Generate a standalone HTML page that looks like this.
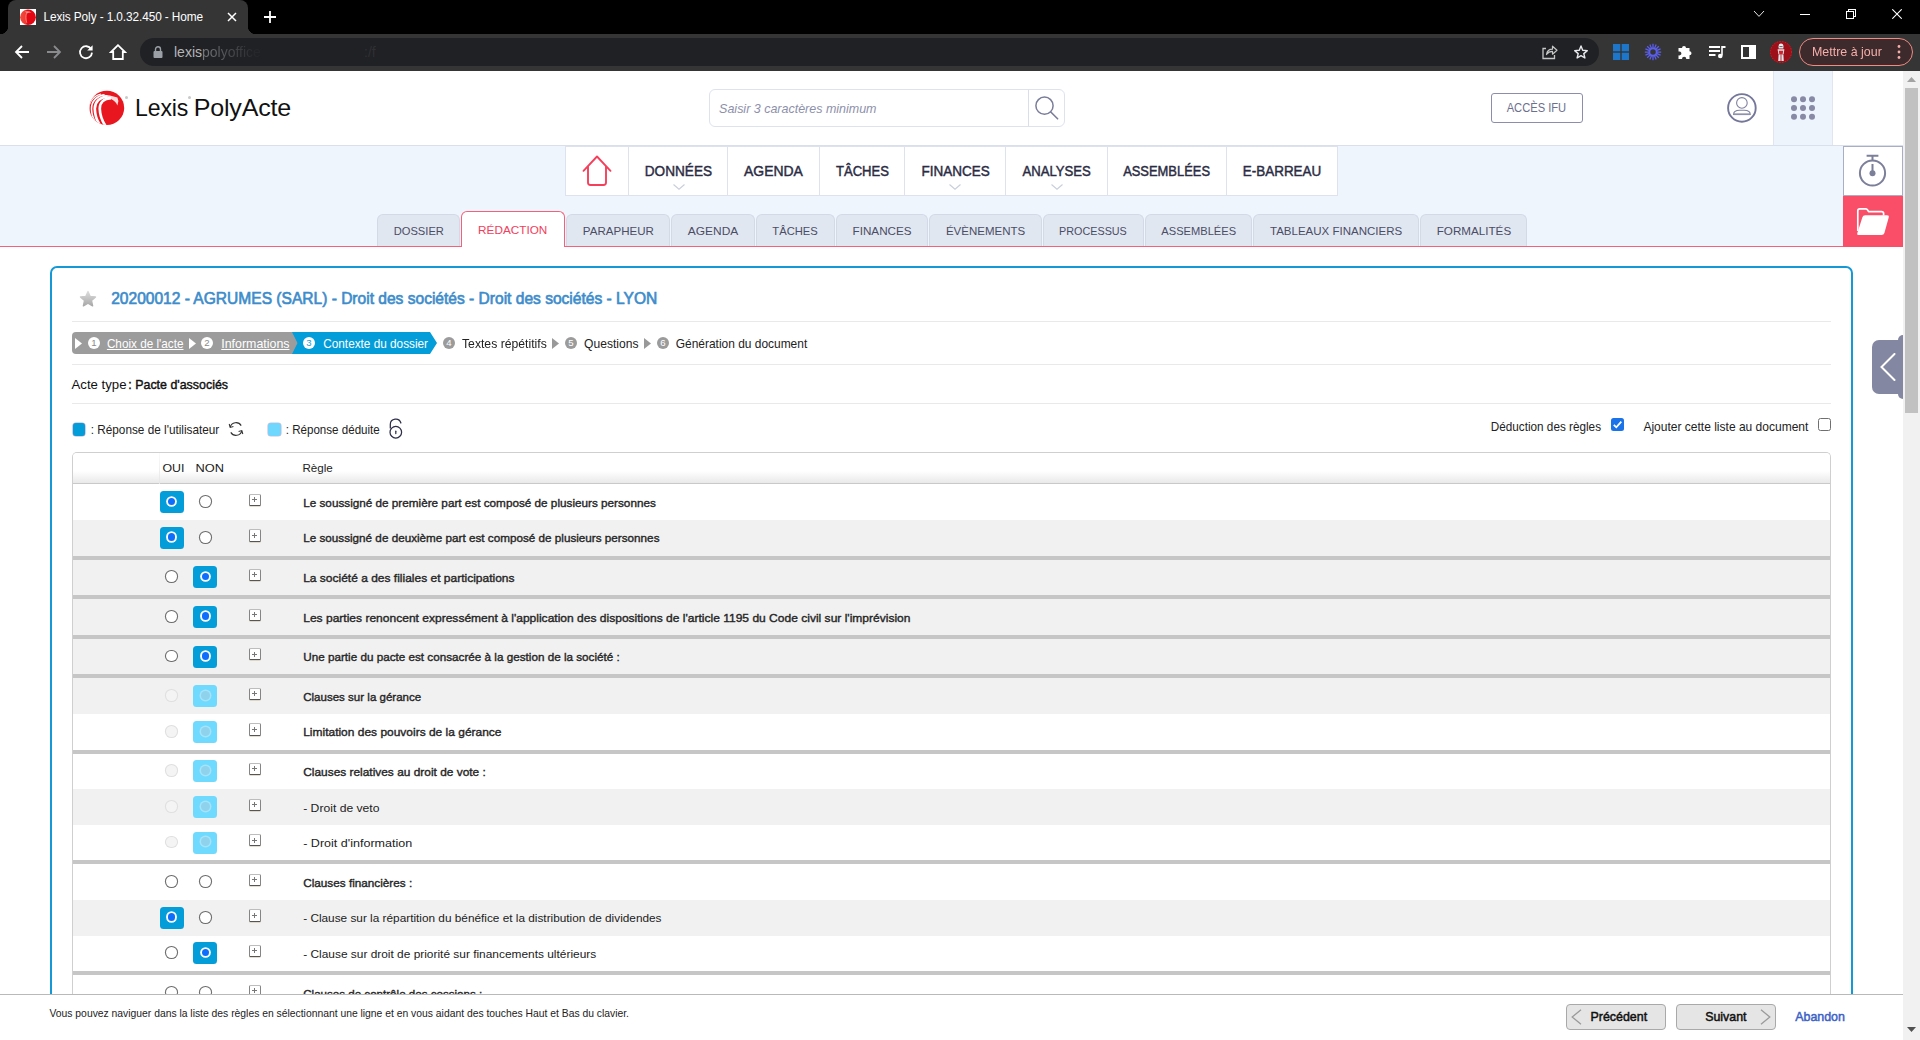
<!DOCTYPE html>
<html lang="fr">
<head>
<meta charset="utf-8">
<title>Lexis Poly - 1.0.32.450 - Home</title>
<style>
*{box-sizing:border-box;margin:0;padding:0}
html,body{width:1920px;height:1040px;overflow:hidden;background:#fff;font-family:"Liberation Sans",sans-serif;color:#222}
.abs{position:absolute}
#root{position:relative;width:1920px;height:1040px;overflow:hidden}
/* ---------- browser chrome ---------- */
#tabstrip{left:0;top:0;width:1920px;height:34px;background:#000}
#tab{left:8px;top:0;width:240px;height:34px;background:#353535;border-radius:8px 8px 0 0}
#tab:before,#tab:after{content:"";position:absolute;bottom:0;width:8px;height:8px;background:radial-gradient(circle at 0 0,transparent 8px,#353535 8.5px)}
#tab:before{left:-8px}
#tab:after{right:-8px;background:radial-gradient(circle at 100% 0,transparent 8px,#353535 8.5px)}
#tabtitle{left:44px;top:10px;font-size:12px;color:#fff;white-space:nowrap;letter-spacing:-.1px}
#toolbar{left:0;top:34px;width:1920px;height:37px;background:#353535}
#omni{left:140px;top:38px;width:1459px;height:28px;border-radius:14px;background:#202124}
#url{left:174px;top:44px;font-size:14px;color:#e8eaed;white-space:nowrap}
#url2{left:364px;top:44px;font-size:14px;color:#2f3034;white-space:nowrap}#url{color:#b4b6b9}#url span{background:linear-gradient(90deg,#787a7e 0,#4c4e52 45%,#26272b 90%);-webkit-background-clip:text;background-clip:text;color:transparent}
#upd{left:1799px;top:38px;width:114px;height:28px;border-radius:14px;border:1px solid #f28b82;background:#3c2a2c;color:#f6aea9;font-size:13px;line-height:26px;padding-left:12px;white-space:nowrap}
/* ---------- page ---------- */
#page{left:0;top:71px;width:1903px;height:969px;background:#fff;overflow:hidden}
#pg{position:absolute;left:0;top:-71px;width:1903px;height:1040px}
#vscroll{left:1903px;top:71px;width:17px;height:969px;background:#f1f1f1}
#vthumb{left:1905px;top:88px;width:13px;height:325px;background:#c1c1c1}

/* header */
#hdr{left:0;top:71px;width:1903px;height:74px;background:#fff}
#logotxt{left:135px;top:94px;font-size:24px;color:#111;white-space:nowrap;letter-spacing:-.2px;line-height:28px}
#search{left:709px;top:89px;width:356px;height:38px;border:1px solid #dde2ee;border-radius:6px;background:#fff}
#search i{position:absolute;left:10px;top:11px;font-size:13.5px;color:#8d90aa;white-space:nowrap;font-style:italic;line-height:16px}
#search b{position:absolute;left:318px;top:0;width:1px;height:36px;background:#d9deec}
#ifu{left:1491px;top:93px;width:92px;height:30px;border:1px solid #8a8dab;border-radius:3px;color:#6c6f8e;font-size:13px;line-height:27px;text-align:center;white-space:nowrap}
#gridbg{left:1773px;top:71px;width:60px;height:75px;background:#eef4fb;border-left:1px solid #dfe6f1;border-right:1px solid #dfe6f1}
/* nav */
#nav{left:0;top:145px;width:1903px;height:102px;background:#eff5fc;border-top:1px solid #d9e0ec}
#redline{left:0;top:246px;width:1903px;height:1px;background:#f4617a}
#menu{left:565px;top:146px;width:773px;height:50px;background:#fff;border:1px solid #dde2ee}
.mi{position:absolute;top:0;height:48px;border-left:1px solid #dde2ee;font-size:14.4px;-webkit-text-stroke:.45px #2b2c44;color:#2b2c44;line-height:48px;white-space:nowrap;text-align:center}
.mi svg{position:absolute;left:50%;margin-left:-6px;top:37px}
.tab{position:absolute;top:214px;height:33px;background:#e1e7f0;border:1px solid #d3dae6;border-bottom:none;border-radius:6px 6px 0 0;font-size:11.5px;color:#4b4d66;line-height:33.6px;text-align:center;white-space:nowrap}
.tab.on{top:211px;height:36px;background:#fff;border-color:#f6607a;color:#f2405c;line-height:37.8px;z-index:2}
#timer{left:1843px;top:146px;width:60px;height:50px;background:#fff;border:1px solid #a9aec4}
#folder{left:1843px;top:196px;width:60px;height:51px;background:#fa4e68}

/* panel */
#panel{left:50px;top:266px;width:1803px;height:800px;border:2px solid #1499d6;border-radius:7px;background:#fff}
.hr{position:absolute;left:72px;width:1759px;height:1px;background:#e9e9e9}
#title{left:111px;top:287.8px;font-size:15.8px;-webkit-text-stroke:.65px #3d8ccb;color:#3d8ccb;white-space:nowrap;line-height:22px}
/* breadcrumb */
#bcgray{left:72px;top:332px;width:226px;height:22px;background:#9c9c9c;border-radius:4px 0 0 4px}
.bc{position:absolute;top:333px;height:22px;line-height:22px;font-size:12.6px;white-space:nowrap}
.bc.w{color:#fff}
.bc.u span{text-decoration:underline}
.bc.k{color:#222}
.num{position:absolute;top:337px;width:12px;height:12px;border-radius:6px;font-size:9.6px;font-style:normal;line-height:12.4px;text-align:center;margin-left:-1px}
.num.a{background:#fff;color:#8a8a8a}
.num.b{background:#fff;color:#1499d6}
.num.c{background:#9b9b9b;color:#fff;margin-left:0}
#acte{left:72px;top:376.5px;font-size:13.6px;color:#111;white-space:nowrap;line-height:16px}
.lg{position:absolute;top:421.8px;font-size:12.2px;color:#222;white-space:nowrap;line-height:16px}
.sq{position:absolute;top:423.4px;width:13px;height:12.6px;border-radius:3px}
.rt{position:absolute;top:418.6px;font-size:12.2px;color:#222;white-space:nowrap;line-height:16px}
.cb{position:absolute;top:418px;width:13px;height:13px;border-radius:2.5px}
/* table */
#tbl{left:72px;top:452px;width:1759px;height:560px;border:1px solid #cfcfcf;border-bottom:none;border-radius:5px 5px 0 0;overflow:hidden;background:#fff}
#th{position:relative;height:31px;margin-bottom:.4px;background:linear-gradient(#fff 0,#fff 60%,#e9e9e9 100%);border-bottom:1px solid #c9c9c9}
#th span{position:absolute;top:6.6px;font-size:11.6px;color:#222;line-height:15px;white-space:nowrap}
.sep{height:4px;background:#c6c6c6}
.r{position:relative;height:35.6px;background:#fff}
.r.g{background:#f1f1f1}
.r p{position:absolute;left:231px;top:11.4px;font-size:11.8px;line-height:15px;color:#222;white-space:nowrap}
.r p.b{-webkit-text-stroke:.38px #262626;color:#262626}
.bx{position:absolute;top:6.8px;width:24px;height:22px;border-radius:3.5px;background:#039dda}
.bx.l{background:#6fd9fe}
.bx.y{left:87px}.bx.n{left:120px}
.rd{position:absolute;top:11.8px;width:10.8px;height:10.8px;border-radius:50%;background:#fff;box-shadow:0 0 0 1.1px #6e6e6e}
.rd.y{left:93.1px}.rd.n{left:127.05px}
.rd.on{width:7.6px;height:7.6px;top:13.3px;background:#0d6efd;box-shadow:0 0 0 1.85px #fff}
.rd.ld{width:9px;height:9px;top:12.6px;background:#8ed2ec;box-shadow:0 0 0 1.5px #a5e3fb}
.rd.on.y{left:94.6px}.rd.on.n{left:128.65px}
.rd.ld.y{left:93.9px}.rd.ld.n{left:127.95px}
.rd.d{background:#f4f4f4;box-shadow:0 0 0 1.1px #e0e0e0}
.pl{position:absolute;left:175.7px;top:9.4px;width:12.4px;height:12.2px;border:1px solid #858585;border-top-color:#bdbdbd;border-bottom-color:#555;border-radius:1.5px;background:#fff;box-shadow:0 .5px 0 #c9b9a0}
.pl:before{content:"";position:absolute;left:2.5px;top:4.5px;width:5px;height:1px;background:#777}
.pl:after{content:"";position:absolute;left:4.5px;top:2.5px;width:1px;height:5px;background:#777}
/* footer */
#foot{left:0;top:994px;width:1903px;height:46px;background:#fff;border-top:1px solid #b9b9b9}
#foottxt{left:50px;top:1006.4px;font-size:11px;color:#222;white-space:nowrap;line-height:15px}
.btn{position:absolute;top:1004px;width:100px;height:26px;border:1px solid #a9a9a9;border-radius:4px;background:#e5e5e5;font-size:13px;-webkit-text-stroke:.5px #111;color:#111;line-height:24.8px;white-space:nowrap}
#aband{left:1795px;top:1009.4px;font-size:13px;-webkit-text-stroke:.5px #3b62c6;color:#3b62c6;white-space:nowrap;line-height:16px}
#handle{left:1872px;top:340px;width:31px;height:54px;background:#8387a2;border-radius:7px 0 0 7px}
#handle2{left:1898px;top:335px;width:5px;height:64px;background:#8387a2;border-radius:5px 0 0 5px}
#th em{font-style:normal}
/*FIT*/
#ttab{display:inline-block;transform-origin:0 50%;transform:translateX(-0.50px) scaleX(0.9861)}
#tupd{display:inline-block;transform-origin:0 50%;transform:translateX(0.00px) scaleX(0.9564)}
#tlogo1{display:inline-block;transform-origin:0 50%;transform:translateX(0.10px) scaleX(0.9613)}
#tlogo2{display:inline-block;transform-origin:0 50%;transform:translateX(-3.25px) scaleX(1.0443)}
#tsearch{display:inline-block;transform-origin:0 50%;transform:translateX(-0.90px) scaleX(0.9243)}
#tifu{display:inline-block;transform-origin:0 50%;transform:translateX(4.67px) scaleX(0.8580)}
#m0{display:inline-block;transform-origin:0 50%;transform:translateX(1.79px) scaleX(0.9456)}
#m1{display:inline-block;transform-origin:0 50%;transform:translateX(0.99px) scaleX(0.9690)}
#m2{display:inline-block;transform-origin:0 50%;transform:translateX(2.94px) scaleX(0.9088)}
#m3{display:inline-block;transform-origin:0 50%;transform:translateX(2.59px) scaleX(0.9386)}
#m4{display:inline-block;transform-origin:0 50%;transform:translateX(3.47px) scaleX(0.9130)}
#m5{display:inline-block;transform-origin:0 50%;transform:translateX(4.14px) scaleX(0.8974)}
#m6{display:inline-block;transform-origin:0 50%;transform:translateX(2.78px) scaleX(0.9349)}
#tb0{display:inline-block;transform-origin:0 50%;transform:translateX(0.64px) scaleX(0.9707)}
#tb1{display:inline-block;transform-origin:0 50%;transform:translateX(-0.88px) scaleX(1.0224)}
#tb2{display:inline-block;transform-origin:0 50%;transform:translateX(-0.14px) scaleX(1.0040)}
#tb3{display:inline-block;transform-origin:0 50%;transform:translateX(-1.20px) scaleX(1.0396)}
#tb4{display:inline-block;transform-origin:0 50%;transform:translateX(0.33px) scaleX(0.9752)}
#tb5{display:inline-block;transform-origin:0 50%;transform:translateX(-0.42px) scaleX(1.0145)}
#tb6{display:inline-block;transform-origin:0 50%;transform:translateX(-0.12px) scaleX(1.0013)}
#tb7{display:inline-block;transform-origin:0 50%;transform:translateX(2.11px) scaleX(0.9374)}
#tb8{display:inline-block;transform-origin:0 50%;transform:translateX(1.37px) scaleX(0.9658)}
#tb9{display:inline-block;transform-origin:0 50%;transform:translateX(-0.05px) scaleX(1.0017)}
#tb10{display:inline-block;transform-origin:0 50%;transform:translateX(-0.25px) scaleX(1.0125)}
#ttitle{display:inline-block;transform-origin:0 50%;transform:translateX(0.20px) scaleX(0.9846)}
#bc1{display:inline-block;transform-origin:0 50%;transform:translateX(-0.10px) scaleX(0.9317)}
#bc2{display:inline-block;transform-origin:0 50%;transform:translateX(-0.75px) scaleX(0.9849)}
#bc3{display:inline-block;transform-origin:0 50%;transform:translateX(-0.75px) scaleX(0.9351)}
#bc4{display:inline-block;transform-origin:0 50%;transform:translateX(0.00px) scaleX(0.9686)}
#bc5{display:inline-block;transform-origin:0 50%;transform:translateX(-0.90px) scaleX(0.9594)}
#bc6{display:inline-block;transform-origin:0 50%;transform:translateX(-0.25px) scaleX(0.9482)}
#tacte1{display:inline-block;transform-origin:0 50%;transform:translateX(-0.50px) scaleX(0.9705)}
#tacte2{display:inline-block;transform-origin:0 50%;transform:translateX(-3.70px) scaleX(0.9140)}
#lg1{display:inline-block;transform-origin:0 50%;transform:translateX(-0.25px) scaleX(0.9655)}
#lg2{display:inline-block;transform-origin:0 50%;transform:translateX(-0.25px) scaleX(0.9501)}
#rt1{display:inline-block;transform-origin:0 50%;transform:translateX(-0.20px) scaleX(0.9624)}
#rt2{display:inline-block;transform-origin:0 50%;transform:translateX(-0.60px) scaleX(0.9860)}
#th0{display:inline-block;transform-origin:0 50%;transform:translateX(-0.50px) scaleX(1.0667)}
#th1{display:inline-block;transform-origin:0 50%;transform:translateX(-0.50px) scaleX(1.1061)}
#th2{display:inline-block;transform-origin:0 50%;transform:translateX(-0.50px) scaleX(1.0001)}
#r1{display:inline-block;transform-origin:0 50%;transform:translateX(-0.80px) scaleX(0.9939)}
#r2{display:inline-block;transform-origin:0 50%;transform:translateX(-0.80px) scaleX(0.9914)}
#r3{display:inline-block;transform-origin:0 50%;transform:translateX(-0.80px) scaleX(1.0165)}
#r4{display:inline-block;transform-origin:0 50%;transform:translateX(-0.80px) scaleX(1.0200)}
#r5{display:inline-block;transform-origin:0 50%;transform:translateX(-0.80px) scaleX(0.9913)}
#r6{display:inline-block;transform-origin:0 50%;transform:translateX(-0.80px) scaleX(0.9780)}
#r7{display:inline-block;transform-origin:0 50%;transform:translateX(-0.80px) scaleX(1.0147)}
#r8{display:inline-block;transform-origin:0 50%;transform:translateX(-0.80px) scaleX(1.0089)}
#r9{display:inline-block;transform-origin:0 50%;transform:translateX(-0.80px) scaleX(1.0298)}
#r10{display:inline-block;transform-origin:0 50%;transform:translateX(-0.80px) scaleX(1.0628)}
#r11{display:inline-block;transform-origin:0 50%;transform:translateX(-0.80px) scaleX(0.9953)}
#r12{display:inline-block;transform-origin:0 50%;transform:translateX(-0.80px) scaleX(1.0007)}
#r13{display:inline-block;transform-origin:0 50%;transform:translateX(-0.80px) scaleX(1.0087)}
#r14{display:inline-block;transform-origin:0 50%;transform:translateX(-0.80px) scaleX(0.9819)}
#tfoot{display:inline-block;transform-origin:0 50%;transform:translateX(-0.50px) scaleX(0.9401)}
#tprev{display:inline-block;transform-origin:0 50%;transform:translateX(-1.50px) scaleX(0.9550)}
#tnext{display:inline-block;transform-origin:0 50%;transform:translateX(-0.80px) scaleX(0.9522)}
#taband{display:inline-block;transform-origin:0 50%;transform:translateX(0.20px) scaleX(0.9546)}
/*ENDFIT*/
#acte b{font-weight:normal;-webkit-text-stroke:.45px #111}
</style>
</head>
<body>
<div id="root">
<!-- BROWSER CHROME -->
<div id="tabstrip" class="abs"></div>
<div id="tab" class="abs"></div>
<svg class="abs" style="left:20px;top:9px" width="16" height="16" viewBox="0 0 16 16"><defs><linearGradient id="fg" x1="0" y1="0" x2="1" y2="0"><stop offset="0" stop-color="#f24a3e"/><stop offset=".38" stop-color="#ee3a32"/><stop offset=".42" stop-color="#e30613"/><stop offset="1" stop-color="#e30613"/></linearGradient></defs><rect width="16" height="16" fill="#fff"/><ellipse cx="8" cy="8.2" rx="7.9" ry="7.7" fill="url(#fg)"/><path d="M6.6 4.2 C5.6 6.5 5.6 10 6.8 13.8" stroke="#f58f7f" stroke-width=".8" fill="none"/><path d="M5 2.6 Q8.5 1.6 11.5 3.6 Q9 3 7 4.6 Z" fill="#f9b9ab" opacity=".8"/></svg>
<div id="tabtitle" class="abs"><span id="ttab">Lexis Poly - 1.0.32.450 - Home</span></div>
<svg class="abs" style="left:227px;top:12px" width="10" height="10" viewBox="0 0 10 10"><path d="M1 1 L9 9 M9 1 L1 9" stroke="#fff" stroke-width="1.5"/></svg>
<svg class="abs" style="left:264px;top:11px" width="12" height="12" viewBox="0 0 12 12"><path d="M6 0 V12 M0 6 H12" stroke="#fff" stroke-width="1.8"/></svg>
<!-- window controls -->
<svg class="abs" style="left:1753px;top:10px" width="12" height="8" viewBox="0 0 12 8"><path d="M1 1 L6 6.4 L11 1" stroke="#e6e6e6" stroke-width="1" fill="none"/></svg>
<div class="abs" style="left:1800px;top:14px;width:10px;height:1px;background:#fff"></div>
<svg class="abs" style="left:1846px;top:9px" width="10" height="10" viewBox="0 0 10 10" shape-rendering="crispEdges"><path d="M.5 2.5 H7.5 V9.5 H.5 Z M2.5 2.5 V.5 H9.5 V7.5 H7.5" stroke="#fff" stroke-width="1" fill="none"/></svg>
<svg class="abs" style="left:1892px;top:9px" width="10" height="10" viewBox="0 0 10 10"><path d="M.3 .3 L9.7 9.7 M9.7 .3 L.3 9.7" stroke="#fff" stroke-width="1.1"/></svg>
<div id="toolbar" class="abs"></div>
<div id="omni" class="abs"></div>
<!-- nav icons -->
<svg class="abs" style="left:14px;top:44px" width="16" height="16" viewBox="0 0 16 16"><path d="M15 8 H2.5 M8 2 L2 8 L8 14" stroke="#fff" stroke-width="1.8" fill="none"/></svg>
<svg class="abs" style="left:46px;top:44px" width="16" height="16" viewBox="0 0 16 16"><path d="M1 8 H13.5 M8 2 L14 8 L8 14" stroke="#8a8b8e" stroke-width="1.8" fill="none"/></svg>
<svg class="abs" style="left:78px;top:44px" width="16" height="16" viewBox="0 0 16 16"><path d="M13.2 5.2 A6 6 0 1 0 14 8.6" stroke="#fff" stroke-width="1.8" fill="none"/><path d="M14.6 1.2 V6.6 H9.2 Z" fill="#fff"/></svg>
<svg class="abs" style="left:109px;top:43px" width="18" height="18" viewBox="0 0 18 18"><path d="M9 2.2 L2 9 H4.2 V16 H13.8 V9 H16 Z" stroke="#fff" stroke-width="1.8" fill="none" stroke-linejoin="miter"/></svg>
<svg class="abs" style="left:153px;top:46px" width="10" height="12" viewBox="0 0 10 12"><rect x="0.5" y="5" width="9" height="7" rx="1" fill="#9aa0a6"/><path d="M2.5 5 V3.3 A2.5 2.5 0 0 1 7.5 3.3 V5" stroke="#9aa0a6" stroke-width="1.4" fill="none"/></svg>
<div id="url" class="abs">lexis<span>polyoffice</span></div><div id="url2" class="abs">:/f</div>
<!-- right toolbar icons -->
<svg class="abs" style="left:1541px;top:44px" width="17" height="16" viewBox="0 0 17 16"><path d="M5 4.5 H2 V14.5 H13.5 V11" stroke="#c4c7c5" stroke-width="1.3" fill="none"/><path d="M5.5 10.5 C6 7 8.5 5.2 11.5 5.2 V2.2 L16 6.2 L11.5 10.2 V7.4 C9 7.4 7 8.3 5.5 10.5 Z" stroke="#c4c7c5" stroke-width="1.2" fill="none" stroke-linejoin="round"/></svg>
<svg class="abs" style="left:1573px;top:44px" width="16" height="16" viewBox="0 0 16 16"><path d="M8 2 L9.7 6.3 L14.3 6.6 L10.8 9.6 L11.9 14 L8 11.6 L4.1 14 L5.2 9.6 L1.7 6.6 L6.3 6.3 Z" stroke="#e8eaed" stroke-width="1.4" fill="none" stroke-linejoin="round"/></svg>
<svg class="abs" style="left:1613px;top:44px" width="16" height="16" viewBox="0 0 16 16"><rect x="0" y="0" width="7.3" height="7.3" fill="#1d76c9"/><rect x="8.7" y="0" width="7.3" height="7.3" fill="#1d76c9"/><rect x="0" y="8.7" width="7.3" height="7.3" fill="#1d76c9"/><rect x="8.7" y="8.7" width="7.3" height="7.3" fill="#1d76c9"/></svg>
<svg class="abs" style="left:1644px;top:43px" width="18" height="18" viewBox="0 0 18 18"><path d="M12.60 9.00 L17.20 9.00 M12.33 10.38 L16.58 12.14 M11.55 11.55 L14.80 14.80 M10.38 12.33 L12.14 16.58 M9.00 12.60 L9.00 17.20 M7.62 12.33 L5.86 16.58 M6.45 11.55 L3.20 14.80 M5.67 10.38 L1.42 12.14 M5.40 9.00 L0.80 9.00 M5.67 7.62 L1.42 5.86 M6.45 6.45 L3.20 3.20 M7.62 5.67 L5.86 1.42 M9.00 5.40 L9.00 0.80 M10.38 5.67 L12.14 1.42 M11.55 6.45 L14.80 3.20 M12.33 7.62 L16.58 5.86" stroke="#5b5ff0" stroke-width="1.25" fill="none"/><circle cx="9" cy="9" r="3.6" fill="none" stroke="#5b5ff0" stroke-width="1.7"/></svg>
<svg class="abs" style="left:1677px;top:44px" width="16" height="16" viewBox="0 0 16 16"><path d="M1.5 4 H5 A2 2 0 1 1 9 4 H12.5 V7.3 A2 2 0 1 1 12.5 11.3 V15 H9.3 A2 2 0 1 0 5 15 H1.5 V11.2 A2 2 0 1 0 1.5 7.6 Z" fill="#fff"/></svg>
<svg class="abs" style="left:1708px;top:44px" width="18" height="16" viewBox="0 0 18 16"><path d="M1 3 H12 M1 7 H12 M1 11 H7.5" stroke="#fff" stroke-width="1.8"/><path d="M14 2 V11.5" stroke="#fff" stroke-width="1.6"/><path d="M14 2 H17.5 V4 H14 Z" fill="#fff"/><circle cx="12.3" cy="12" r="2.3" fill="#fff"/></svg>
<svg class="abs" style="left:1741px;top:45px" width="15" height="14" viewBox="0 0 15 14"><rect x="1" y="1" width="13" height="12" stroke="#fff" stroke-width="2" fill="none"/><rect x="8" y="1" width="6" height="12" fill="#fff"/></svg>
<svg class="abs" style="left:1770px;top:41px" width="22" height="22" viewBox="0 0 22 22"><circle cx="11" cy="11" r="11" fill="#9e1019"/><circle cx="11" cy="11" r="10.5" fill="none" stroke="#c22a30" stroke-width="1" stroke-dasharray="1.2 1.6"/><path d="M8.6 5.2 Q8.6 2.4 11 2.4 Q13.4 2.4 13.4 5.2 V7.6 H8.6 Z" fill="#eceff1"/><path d="M9.4 5.6 H12.6" stroke="#555" stroke-width=".9"/><path d="M7.6 8.2 H14.4 L13.6 13.2 H8.4 Z" fill="#e2e5e8"/><path d="M8.8 9.8 H13.2 L12.6 13.6 H9.4 Z" fill="#d3222b"/><path d="M8.6 13.6 H10.6 V20 H8.2 Z M11.4 13.6 H13.4 L13.8 20 H11.4 Z" fill="#e2e5e8"/></svg>
<div id="upd" class="abs"><span id="tupd">Mettre à jour</span></div>
<svg class="abs" style="left:1896.5px;top:44px" width="4" height="16" viewBox="0 0 4 16"><circle cx="2" cy="2.5" r="1.4" fill="#f6aea9"/><circle cx="2" cy="8" r="1.4" fill="#f6aea9"/><circle cx="2" cy="13.5" r="1.4" fill="#f6aea9"/></svg>

<!-- PAGE -->
<div id="page" class="abs"><div id="pg">

<div id="hdr" class="abs"></div>
<svg class="abs" style="left:87px;top:89px" width="39" height="38" viewBox="0 0 39 38">
<defs><clipPath id="lc"><ellipse cx="19.8" cy="18.9" rx="17.4" ry="17.2"/></clipPath></defs>
<g clip-path="url(#lc)"><rect width="39" height="38" fill="#e8171f"/>
<g stroke="#fff" fill="none">
<path d="M24 9.2 C17 9.5 12.6 13.5 12.8 20 C13 26 14.5 31 18.5 37" stroke-width="2.7"/>
<path d="M20.5 7.3 C13 8.2 7.6 12.5 7.8 20 C8 25.5 9.2 30.5 12.5 35.5" stroke-width="2.7"/>
<path d="M17.5 5.8 C10.5 6.8 4.3 11.5 4.5 20 C4.6 24.5 5.6 28.5 8 32.5" stroke-width="1.6"/>
<path d="M14 5 C8 6.2 1.8 11.5 2 20.5 C2.1 23 2.6 25.5 3.6 28" stroke-width="1.1"/>
</g>
<path d="M15 5.6 Q23 6.2 30.4 8.4 L31.4 12 L30.4 16.4 Q27.5 10.5 22 9.6 Z" fill="#fff" opacity=".85"/>
</g></svg>
<div id="logotxt" class="abs"><span id="tlogo1">Lexis</span> <span id="tlogo2">PolyActe</span></div>
<div class="abs" style="left:125px;top:96px;width:3px;height:3px;border-radius:2px;background:#c9c9c9"></div>
<div class="abs" style="left:188px;top:96px;width:3px;height:3px;border-radius:2px;background:#c9c9c9"></div>
<div id="search" class="abs"><i><span id="tsearch">Saisir 3 caractères minimum</span></i><b></b></div>
<svg class="abs" style="left:1033px;top:94px" width="28" height="28" viewBox="0 0 28 28"><circle cx="11.5" cy="11.7" r="8.6" stroke="#7a7d99" stroke-width="1.5" fill="none"/><path d="M17.8 18 L24.6 24.8" stroke="#7a7d99" stroke-width="1.6" stroke-linecap="round"/></svg>
<div id="ifu" class="abs"><span id="tifu">ACCÈS IFU</span></div>
<svg class="abs" style="left:1726px;top:92px" width="32" height="32" viewBox="0 0 32 32"><circle cx="15.9" cy="15.9" r="13.8" stroke="#74779a" stroke-width="1.9" fill="none"/><circle cx="15.9" cy="10.9" r="5.3" stroke="#7f82a0" stroke-width="1.1" fill="none"/><path d="M7.6 22.4 C7.6 19.4 11 18.3 13.6 18.3 H18.2 C20.8 18.3 24.2 19.4 24.2 22.4 Z" stroke="#7f82a0" stroke-width="1.1" fill="none"/><path d="M7.6 22.3 H24.2" stroke="#8f92ad" stroke-width="1.6"/></svg>
<div id="gridbg" class="abs"></div>
<svg class="abs" style="left:1789px;top:94px" width="28" height="28" viewBox="0 0 28 28"><g fill="#8789a5"><circle cx="5" cy="5.2" r="3"/><circle cx="14" cy="5.2" r="3"/><circle cx="23" cy="5.2" r="3"/><circle cx="5" cy="14" r="3"/><circle cx="14" cy="14" r="3"/><circle cx="23" cy="14" r="3"/><circle cx="5" cy="22.8" r="3"/><circle cx="14" cy="22.8" r="3"/><circle cx="23" cy="22.8" r="3"/></g></svg>

<div id="nav" class="abs"></div>
<div id="menu" class="abs">
<svg style="position:absolute;left:15px;top:7px" width="32" height="34" viewBox="0 0 32 34"><path d="M2.5 16.8 L16 2.5 L29.5 16.8 M7 12.5 V28.5 Q7 31 9.5 31 H22.5 Q25 31 25 28.5 V12.5" stroke="#f5405c" stroke-width="1.9" fill="none" stroke-linecap="round" stroke-linejoin="round"/></svg>
<div class="mi" style="left:62px;width:100px"><span id="m0">DONNÉES</span><svg width="12" height="6" viewBox="0 0 12 6"><path d="M.5 .5 L6 5.2 L11.5 .5" stroke="#c9cedb" stroke-width="1.1" fill="none"/></svg></div>
<div class="mi" style="left:161px;width:92px"><span id="m1">AGENDA</span></div>
<div class="mi" style="left:253px;width:85px"><span id="m2">TÂCHES</span></div>
<div class="mi" style="left:338px;width:101px"><span id="m3">FINANCES</span><svg width="12" height="6" viewBox="0 0 12 6"><path d="M.5 .5 L6 5.2 L11.5 .5" stroke="#c9cedb" stroke-width="1.1" fill="none"/></svg></div>
<div class="mi" style="left:439px;width:102px"><span id="m4">ANALYSES</span><svg width="12" height="6" viewBox="0 0 12 6"><path d="M.5 .5 L6 5.2 L11.5 .5" stroke="#c9cedb" stroke-width="1.1" fill="none"/></svg></div>
<div class="mi" style="left:541px;width:120px"><span id="m5">ASSEMBLÉES</span></div>
<div class="mi" style="left:660px;width:111px"><span id="m6">E-BARREAU</span></div>
</div>
<div class="tab" style="left:377px;width:83px"><span id="tb0">DOSSIER</span></div>
<div class="tab on" style="left:461px;width:104px"><span id="tb1">RÉDACTION</span></div>
<div class="tab" style="left:566px;width:104px"><span id="tb2">PARAPHEUR</span></div>
<div class="tab" style="left:671px;width:84px"><span id="tb3">AGENDA</span></div>
<div class="tab" style="left:756px;width:79px"><span id="tb4">TÂCHES</span></div>
<div class="tab" style="left:836px;width:92px"><span id="tb5">FINANCES</span></div>
<div class="tab" style="left:929px;width:113px"><span id="tb6">ÉVÈNEMENTS</span></div>
<div class="tab" style="left:1043px;width:101px"><span id="tb7">PROCESSUS</span></div>
<div class="tab" style="left:1145px;width:107px"><span id="tb8">ASSEMBLÉES</span></div>
<div class="tab" style="left:1253px;width:166px"><span id="tb9">TABLEAUX FINANCIERS</span></div>
<div class="tab" style="left:1420px;width:107px"><span id="tb10">FORMALITÉS</span></div>
<div id="redline" class="abs"></div>
<div id="timer" class="abs"><svg style="position:absolute;left:12.8px;top:7px" width="32" height="34" viewBox="0 0 32 34"><circle cx="15.5" cy="19" r="12.6" stroke="#7c7f99" stroke-width="2" fill="none"/><path d="M9.6 1.8 H21.4 M15.5 1.8 V6.4 M15.5 10 V19" stroke="#7c7f99" stroke-width="2" fill="none"/><circle cx="15.5" cy="19.3" r="3" fill="#7c7f99"/></svg></div>
<div id="folder" class="abs"><svg style="position:absolute;left:12.6px;top:11px" width="34" height="30" viewBox="0 0 34 30"><path d="M1.8 24 V3.8 Q1.8 1.8 3.8 1.8 H9.6 Q10.6 1.8 11.2 2.6 L12.6 4.6 H25.6 Q27.6 4.6 27.6 6.6 V8.4" stroke="#fff" stroke-width="1.7" fill="none" stroke-linejoin="round"/><path d="M1.2 26.4 L6.4 10.2 Q7 8.2 9.2 8.2 H31 Q33.4 8.2 32.7 10.4 L28.4 26 Q27.8 28 25.6 28 H2.6 Q.7 28 1.2 26.4 Z" fill="#fff"/></svg></div>


<div id="panel" class="abs"></div>
<svg class="abs" style="left:79px;top:290px" width="18" height="17" viewBox="0 0 18 17"><defs><linearGradient id="sg" x1="0" y1="0" x2="0" y2="1"><stop offset="0" stop-color="#dcdcdc"/><stop offset="1" stop-color="#a9a9a9"/></linearGradient></defs><path d="M9 1.6 L11.2 6.5 L16.5 7 L12.5 10.6 L13.6 15.8 L9 13.1 L4.4 15.8 L5.5 10.6 L1.5 7 L6.8 6.5 Z" fill="url(#sg)" stroke="url(#sg)" stroke-width="1.4" stroke-linejoin="round"/></svg>
<div id="title" class="abs"><span id="ttitle">20200012 - AGRUMES (SARL) - Droit des sociétés - Droit des sociétés - LYON</span></div>
<div class="hr" style="top:321px"></div>
<div id="bcgray" class="abs"></div>
<svg class="abs" style="left:292px;top:332px" width="146" height="22" viewBox="0 0 146 22"><path d="M0 0 H138 L145 11 L138 22 H0 L5.5 11 Z" fill="#039dda"/></svg>
<svg class="abs" style="left:75px;top:338px" width="7" height="11" viewBox="0 0 7 11"><path d="M0 0 L7 5.5 L0 11 Z" fill="#fff"/></svg>
<i class="num a" style="left:89px">1</i>
<div class="bc w u" style="left:107px"><span id="bc1">Choix de l'acte</span></div>
<svg class="abs" style="left:189px;top:338px" width="7" height="11" viewBox="0 0 7 11"><path d="M0 0 L7 5.5 L0 11 Z" fill="#fff"/></svg>
<i class="num a" style="left:202px">2</i>
<div class="bc w u" style="left:222px"><span id="bc2">Informations</span></div>
<i class="num b" style="left:304px">3</i>
<div class="bc w" style="left:324px"><span id="bc3">Contexte du dossier</span></div>
<i class="num c" style="left:443px">4</i>
<div class="bc k" style="left:462px"><span id="bc4">Textes répétitifs</span></div>
<svg class="abs" style="left:552px;top:338px" width="7" height="11" viewBox="0 0 7 11"><path d="M0 0 L7 5.5 L0 11 Z" fill="#999"/></svg>
<i class="num c" style="left:565px">5</i>
<div class="bc k" style="left:585px"><span id="bc5">Questions</span></div>
<svg class="abs" style="left:644px;top:338px" width="7" height="11" viewBox="0 0 7 11"><path d="M0 0 L7 5.5 L0 11 Z" fill="#999"/></svg>
<i class="num c" style="left:657px">6</i>
<div class="bc k" style="left:676px"><span id="bc6">Génération du document</span></div>
<div class="hr" style="top:364px"></div>
<div id="acte" class="abs"><span id="tacte1">Acte type</span> <b id="tacte2">: Pacte d'associés</b></div>
<div class="hr" style="top:403px"></div>
<i class="sq" style="left:72.8px;width:12.3px;background:#039dda;box-shadow:0 0 0 .6px #b9a9d0"></i>
<div class="lg" style="left:91px"><span id="lg1">: Réponse de l'utilisateur</span></div>
<svg class="abs" style="left:228px;top:421px" width="16" height="16" viewBox="0 0 16 16"><g stroke="#333" stroke-width="1.1" fill="none"><path d="M2.2 6.2 A6 6 0 0 1 13.2 4.6"/><path d="M13.8 9.8 A6 6 0 0 1 2.8 11.4"/><path d="M1.2 3 L2.2 6.4 L5.4 5.4"/><path d="M14.8 13 L13.8 9.6 L10.6 10.6"/></g></svg>
<i class="sq" style="left:268px;background:#6fd7fd;box-shadow:0 0 0 .6px #d8b9d6"></i>
<div class="lg" style="left:286px"><span id="lg2">: Réponse déduite</span></div>
<svg class="abs" style="left:388px;top:417.6px" width="15" height="21" viewBox="0 0 15 21"><g stroke="#2e2e4a" stroke-width="1.25" fill="none" stroke-linecap="round"><path d="M2.3 10 V6.4 A5.4 5.4 0 0 1 12.9 5"/><circle cx="7.8" cy="14.2" r="5.8"/><path d="M7.8 13.2 V15.6"/></g></svg>
<div class="rt" style="left:1491px"><span id="rt1">Déduction des règles</span></div>
<i class="cb" style="left:1611px;background:#1a73e8"></i>
<svg class="abs" style="left:1611px;top:418px" width="13" height="13" viewBox="0 0 13 13"><path d="M2.8 6.8 L5.3 9.3 L10.3 3.6" stroke="#fff" stroke-width="1.8" fill="none"/></svg>
<div class="rt" style="left:1644px"><span id="rt2">Ajouter cette liste au document</span></div>
<i class="cb" style="left:1818px;background:#fff;border:1px solid #6f6f6f"></i>
<div id="tbl" class="abs">
<div id="th"><span style="left:90px"><em id="th0">OUI</em></span><span style="left:123px"><em id="th1">NON</em></span><span style="left:230px"><em id="th2">Règle</em></span><b style="position:absolute;left:86px;top:0;width:1px;height:31px;background:linear-gradient(#fafafa,#e6e6e6)"></b></div>
<div class="r"><i class="bx y"></i><i class="rd on y"></i><i class="rd n"></i><i class="pl"></i><p class="b"><span id="r1">Le soussigné de première part est composé de plusieurs personnes</span></p></div>
<div class="r g"><i class="bx y"></i><i class="rd on y"></i><i class="rd n"></i><i class="pl"></i><p class="b"><span id="r2">Le soussigné de deuxième part est composé de plusieurs personnes</span></p></div>
<div class="sep"></div>
<div class="r g"><i class="rd y"></i><i class="bx n"></i><i class="rd on n"></i><i class="pl"></i><p class="b"><span id="r3">La société a des filiales et participations</span></p></div>
<div class="sep"></div>
<div class="r g"><i class="rd y"></i><i class="bx n"></i><i class="rd on n"></i><i class="pl"></i><p class="b"><span id="r4">Les parties renoncent expressément à l'application des dispositions de l'article 1195 du Code civil sur l'imprévision</span></p></div>
<div class="sep"></div>
<div class="r g"><i class="rd y"></i><i class="bx n"></i><i class="rd on n"></i><i class="pl"></i><p class="b"><span id="r5">Une partie du pacte est consacrée à la gestion de la société :</span></p></div>
<div class="sep"></div>
<div class="r g"><i class="rd d y"></i><i class="bx l n"></i><i class="rd ld n"></i><i class="pl"></i><p class="b"><span id="r6">Clauses sur la gérance</span></p></div>
<div class="r"><i class="rd d y"></i><i class="bx l n"></i><i class="rd ld n"></i><i class="pl"></i><p class="b"><span id="r7">Limitation des pouvoirs de la gérance</span></p></div>
<div class="sep"></div>
<div class="r"><i class="rd d y"></i><i class="bx l n"></i><i class="rd ld n"></i><i class="pl"></i><p class="b"><span id="r8">Clauses relatives au droit de vote :</span></p></div>
<div class="r g"><i class="rd d y"></i><i class="bx l n"></i><i class="rd ld n"></i><i class="pl"></i><p><span id="r9">- Droit de veto</span></p></div>
<div class="r"><i class="rd d y"></i><i class="bx l n"></i><i class="rd ld n"></i><i class="pl"></i><p><span id="r10">- Droit d'information</span></p></div>
<div class="sep"></div>
<div class="r"><i class="rd y"></i><i class="rd n"></i><i class="pl"></i><p class="b"><span id="r11">Clauses financières :</span></p></div>
<div class="r g"><i class="bx y"></i><i class="rd on y"></i><i class="rd n"></i><i class="pl"></i><p><span id="r12">- Clause sur la répartition du bénéfice et la distribution de dividendes</span></p></div>
<div class="r"><i class="rd y"></i><i class="bx n"></i><i class="rd on n"></i><i class="pl"></i><p><span id="r13">- Clause sur droit de priorité sur financements ultérieurs</span></p></div>
<div class="sep"></div>
<div class="r"><i class="rd y"></i><i class="rd n"></i><i class="pl"></i><p class="b"><span id="r14">Clauses de contrôle des cessions :</span></p></div>
</div>
<div id="handle2" class="abs"></div>
<div id="handle" class="abs"><svg style="position:absolute;left:8px;top:13px" width="16" height="28" viewBox="0 0 16 28"><path d="M14.5 1 L1.5 14 L14.5 27" stroke="#fff" stroke-width="2" fill="none" stroke-linecap="round"/></svg></div>
<div id="foot" class="abs"></div>
<div id="foottxt" class="abs"><span id="tfoot">Vous pouvez naviguer dans la liste des règles en sélectionnant une ligne et en vous aidant des touches Haut et Bas du clavier.</span></div>
<div class="btn" style="left:1566px;padding-left:25px"><span id="tprev">Précédent</span><svg style="position:absolute;left:4px;top:4px" width="11" height="16" viewBox="0 0 11 16"><path d="M10 .8 L1.2 8 L10 15.2" stroke="#9a9a9a" stroke-width="1.3" fill="none"/></svg></div>
<div class="btn" style="left:1676px;padding-left:29px"><span id="tnext">Suivant</span><svg style="position:absolute;left:83px;top:4px" width="11" height="16" viewBox="0 0 11 16"><path d="M1 .8 L9.8 8 L1 15.2" stroke="#9a9a9a" stroke-width="1.3" fill="none"/></svg></div>
<div id="aband" class="abs"><span id="taband">Abandon</span></div>

</div></div>
<div id="vscroll" class="abs"></div>
<div id="vthumb" class="abs"></div>
<svg class="abs" style="left:1907px;top:77px" width="9" height="5" viewBox="0 0 9 5"><path d="M0 5 L4.5 0 L9 5 Z" fill="#a3a3a3"/></svg>
<svg class="abs" style="left:1907px;top:1027px" width="9" height="5" viewBox="0 0 9 5"><path d="M0 0 L4.5 5 L9 0 Z" fill="#505050"/></svg>
</div>
</body>
</html>
